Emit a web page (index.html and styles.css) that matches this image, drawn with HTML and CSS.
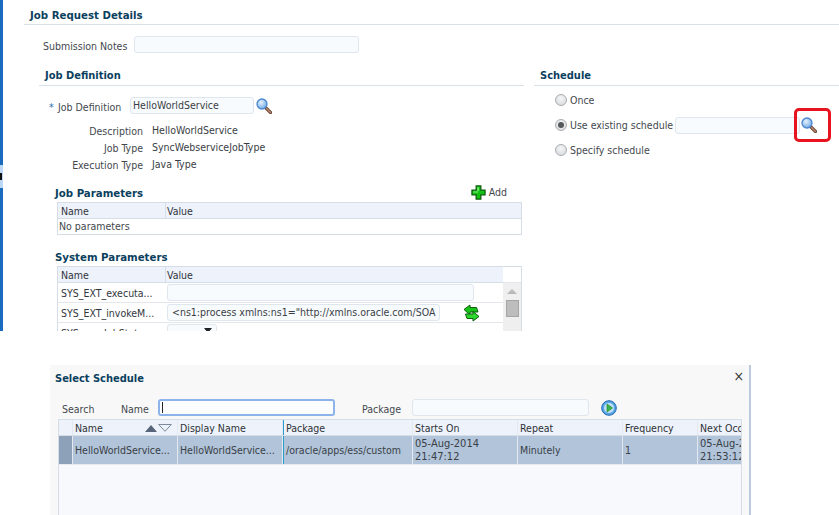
FILE: index.html
```html
<!DOCTYPE html>
<html lang="en">
<head>
<meta charset="utf-8">
<title>Job Request Details</title>
<link rel="stylesheet" href="styles.css">
</head>
<body>
<svg class="defs" width="0" height="0" aria-hidden="true">
  <defs>
    <radialGradient id="lens" cx="40%" cy="35%" r="70%"><stop offset="0" stop-color="#e6f2fc"/><stop offset="1" stop-color="#6aa5e6"/></radialGradient>
    <symbol id="search" viewBox="0 0 16 16">
      <path d="M10 10L14.5 14.5" stroke="#6b4a3a" stroke-width="3.2" stroke-linecap="round"/>
      <path d="M10.500 10.500L14.300 14.300" stroke="#c08a70" stroke-width="1.300" stroke-linecap="round"/>
      <circle cx="6" cy="6" r="5" fill="url(#lens)" stroke="#4a86cf" stroke-width="1.300"/>
    </symbol>
  </defs>
</svg>
<div class="top">
  <div class="bar"><div class="bar-upper"></div><div class="bar-handle"><span class="bar-arrow"></span></div><div class="bar-lower"></div></div>
  <main class="main">
    <h1 class="title">Job Request Details</h1>
    <div class="notes"><label class="notes-label">Submission Notes</label><span class="input notes-input"></span></div>
    <div class="cols">
      <section class="col-left">
        <h2 class="sub">Job Definition</h2>
        <div class="jobdef"><span class="star">*</span><label class="jobdef-label">Job Definition</label><span class="input jobdef-input">HelloWorldService</span><svg class="icon16"><use href="#search"/></svg></div>
        <dl class="facts">
          <dt>Description</dt><dd>HelloWorldService</dd>
          <dt>Job Type</dt><dd>SyncWebserviceJobType</dd>
          <dt>Execution Type</dt><dd>Java Type</dd>
        </dl>
        <div class="tbl-head">
          <h3 class="sub3">Job Parameters</h3>
          <span class="add"><svg class="icon-add" viewBox="0 0 16 16"><path d="M5.500 1h5v4.500H15v5h-4.500V15h-5v-4.500H1v-5h4.500z" fill="#12c312" stroke="#0b5a0b" stroke-width="1.300"/><path d="M6.800 2.500h1.500v4H6.800zM2.500 6.800h5V8h-5z" fill="#8df08d"/></svg>Add</span>
        </div>
        <div class="params">
          <div class="params-row hdr"><span class="c1">Name</span><span class="c2">Value</span></div>
          <div class="empty">No parameters</div>
        </div>
        <h3 class="sub3 sysh">System Parameters</h3>
        <div class="sys">
          <div class="sys-body">
            <div class="params-row hdr"><span class="c1">Name</span><span class="c2">Value</span></div>
            <div class="sys-row"><span class="c1">SYS_EXT_executa...</span><span class="input sys-in1"></span></div>
            <div class="sys-row"><span class="c1">SYS_EXT_invokeM...</span><span class="input sys-in2">&lt;ns1:process xmlns:ns1="http://xmlns.oracle.com/SOA</span><svg class="icon-swap" viewBox="0 0 17 18"><path d="M1 5.500L7 1v2.500h6.500l1.500 4.500H7v3z" fill="#18c418" stroke="#0b5f0b"/><path d="M16 12.500L10 17v-2.500H4L2.500 10H10V7.500z" fill="#2fd62f" stroke="#0b5f0b"/></svg></div>
            <div class="sys-row"><span class="c1">SYS_userJobState</span><span class="input sys-sel"><span class="caret"></span></span></div>
          </div>
          <div class="scroll"><div class="scroll-top"></div><span class="scroll-up"></span><div class="thumb"></div></div>
        </div>
      </section>
      <section class="col-right">
        <h2 class="sub">Schedule</h2>
        <div class="radio-row r1"><span class="radio"></span>Once</div>
        <div class="radio-row r2"><span class="radio on"></span>Use existing schedule<span class="input sched-input"></span><svg class="icon16 sched-icon"><use href="#search"/></svg><span class="red"></span></div>
        <div class="radio-row r3"><span class="radio"></span>Specify schedule</div>
      </section>
    </div>
  </main>
</div>
<section class="dialog">
  <div class="dlg-head"><h2 class="sub">Select Schedule</h2><span class="close">×</span></div>
  <div class="search">
    <span class="s-search">Search</span><label class="s-name">Name</label>
    <span class="input focus"><span class="cursor"></span></span>
    <label class="s-pack">Package</label><span class="input s-packin"></span>
    <svg class="icon-go" viewBox="0 0 16 16"><circle cx="8" cy="8" r="7.300" fill="#5aa7e6" stroke="#1f65ad"/><circle cx="8" cy="8" r="5" fill="#bfe0f7"/><path d="M6 4v8l5.500-4z" fill="#39b54a" stroke="#1a7f2a" stroke-width=".6"/></svg>
  </div>
  <div class="grid">
    <div class="g-row g-hdr">
      <span class="g0"></span>
      <span class="gc sorted">Name<span class="sort"><span class="tri-up"></span><svg class="tri-down" viewBox="0 0 14 8"><path d="M.7.500h12.600L7 7.300z" fill="none" stroke="#7c8a99"/></svg></span></span>
      <span class="gc">Display Name</span><span class="gc mark">Package</span><span class="gc">Starts On</span><span class="gc">Repeat</span><span class="gc">Frequency</span><span class="gc">Next Occurrence</span>
    </div>
    <div class="g-row g-sel">
      <span class="g0"></span>
      <span class="gc">HelloWorldService...</span><span class="gc">HelloWorldService...</span><span class="gc mark">/oracle/apps/ess/custom</span><span class="gc date"><span>05-Aug-2014<br>21:47:12</span></span><span class="gc">Minutely</span><span class="gc">1</span><span class="gc date"><span>05-Aug-2014<br>21:53:12</span></span>
    </div>
  </div>
</section>
</body>
</html>
```
FILE: styles.css
```css
* { box-sizing: border-box; }
html, body { margin: 0; padding: 0; background: #fff; }
body {
  width: 839px; height: 515px; overflow: hidden;
  font-family: "DejaVu Sans Condensed", "DejaVu Sans", sans-serif;
  font-stretch: condensed; font-size: 10.5px; line-height: 14px; color: #44484e;
}
.defs { position: absolute; }
h1, h2, h3, dl, dd { margin: 0; }

.top { height: 331px; overflow: hidden; display: flex; }
.bar { width: 3px; flex: none; display: flex; flex-direction: column; }
.bar-upper { height: 165px; background: #1a6bbd; }
.bar-lower { flex: 1; background: #1a6bbd; }
.bar-handle { height: 23px; background: #bcd8f4; display: flex; align-items: center; }
.bar-arrow { width: 2px; height: 7px; background: #111; }

.main { flex: 1; min-width: 0; }
.title, .sub, .sub3 { font-weight: 700; color: #0b3f5e; font-size: 11px; line-height: 14px; }
.title, .sub3 { font-size: 11.35px; }
.title { height: 25px; padding: 8px 0 0 6px; margin-left: 21px; border-bottom: 1px solid #d9e0e8; }
.notes { display: flex; align-items: center; height: 17px; margin: 11px 0 0 40px; }
.notes-label { width: 91px; padding-top: 2px; }
.input { display: block; flex: none; border: 1px solid #dfe6ee; border-radius: 3px; background: #f8fbfe; height: 17px; white-space: nowrap; overflow: hidden; color: #3a3e44; line-height: 15px; padding-left: 2px; }
.notes-input { width: 225px; }

.cols { display: flex; margin-top: 15px; }
.col-left { width: 485px; margin-left: 36px; flex: none; }
.col-right { flex: 1; margin-left: 10px; }
.sub { height: 18px; padding: 1px 0 0 6px; border-bottom: 1px solid #d9e0e8; }

.jobdef { display: flex; align-items: center; height: 17px; margin-top: 11px; }
.star { width: 9px; margin-left: 10px; color: #2a6fb0; padding-top: 2px; }
.jobdef-label { width: 72px; padding-top: 2px; }
.jobdef-input { width: 124px; }
.icon16 { width: 16px; height: 16px; flex: none; margin-left: 2px; }

.facts { display: grid; grid-template-columns: 104px 1fr; column-gap: 9px; row-gap: 3px; margin-top: 10px; }
.facts dt { text-align: right; }
.facts dd { margin-top: -1px; color: #3a3e44; }

.tbl-head { display: flex; justify-content: space-between; align-items: center; height: 16px; margin: 12px 17px 0 16px; }
.add { display: flex; align-items: center; gap: 3px; }
.icon-add { width: 15px; height: 15px; }
.tbl-head .sub3 { padding-top: 1px; }
.sysh { margin: 15px 0 2px 16px; }
.params { margin: 2px 2px 0 18px; border: 1px solid #d5dde7; }
.params-row { display: flex; height: 16px; }
.hdr { background: #eef2fa; border-bottom: 1px solid #d5dde7; color: #30343a; }
.hdr span { padding-top: 1px; }
.c1 { width: 108px; flex: none; padding-left: 3px; }
.hdr .c1 { border-right: 1px solid #d5dde7; }
.c2 { padding-left: 1px; }
.empty { height: 15px; padding-left: 1px; line-height: 14px; }

.sys { display: flex; margin: 0 2px 0 18px; border: 1px solid #d5dde7; border-bottom: 0; }
.sys-body { width: 445px; flex: none; }
.sys-row { display: flex; align-items: center; height: 20px; border-bottom: 1px solid #e3e7ec; }
.sys-row .c1 { width: 109px; color: #33373d; }
.sys-in1 { width: 307px; }
.sys-in2 { width: 273px; padding-left: 4px; }
.sys-sel { width: 50px; position: relative; }
.caret { position: absolute; right: 4px; top: 3px; border: 4px solid transparent; border-top: 5px solid #222; border-bottom: 0; }
.icon-swap { width: 17px; height: 18px; margin-left: 23px; }
.scroll { flex: 1; background: #efefef; display: flex; flex-direction: column; align-items: center; }
.scroll-top { height: 16px; width: 100%; background: #fff; border-bottom: 1px solid #e3e7ec; }
.scroll-up { margin-top: 6px; border: 5px solid transparent; border-bottom: 5px solid #b9b9b9; border-top: 0; }
.thumb { width: 13px; height: 17px; margin-top: 6px; background: #bdbdbd; border: 1px solid #a5a5a5; }

.radio-row { display: flex; align-items: center; height: 16px; margin-left: 21px; }
.r1 { margin-top: 6px; }
.r2 { margin-top: 9px; position: relative; }
.r3 { margin-top: 9px; }
.radio { width: 12px; height: 12px; border-radius: 50%; margin-right: 3px; border: 1px solid #a9adb2; background: radial-gradient(circle at 50% 35%, #f6f6f6, #d4d6d9); flex: none; position: relative; }
.radio.on::after { content: ""; position: absolute; left: 2px; top: 2px; width: 6px; height: 6px; border-radius: 50%; background: #55585c; }
.sched-input { width: 125px; margin-left: 2px; }
.sched-icon { margin-left: 1px; }
.red { position: absolute; left: 239px; top: -9px; width: 37px; height: 34px; border: 3px solid #e7131f; border-radius: 5px; }

.dialog { width: 701px; height: 150px; margin: 34px 0 0 50px; background: #f8f8f8; border-right: 2px solid #bccadb; padding: 0 8px 0 5px; }
.dlg-head { display: flex; justify-content: space-between; padding-top: 7px; height: 34px; }
.dlg-head .sub { border: 0; padding: 0; }
.close { font-size: 14px; color: #333; line-height: 8px; margin-right: -3px; }
.search { display: flex; align-items: center; height: 17px; }
.s-search { margin-left: 7px; width: 59px; padding-top: 2px; }
.s-name { width: 37px; padding-top: 2px; }
.focus { width: 177px; border-color: #8db4ea; border-width: 2px; background: #fbfdff; border-radius: 3px; padding: 1px 0 0 2px; }
.cursor { display: block; width: 1px; height: 11px; background: #222; }
.s-pack { margin-left: 27px; width: 50px; padding-top: 2px; }
.s-packin { width: 177px; }
.icon-go { width: 16px; height: 16px; margin-left: 12px; }
.grid { margin: 3px 0 0 3px; width: 684px; height: 96px; background: #f8f9fd; border-left: 1px solid #d5dde7; border-top: 1px solid #d5dde7; border-right: 1px solid #d5dde7; overflow: hidden; }
.g-row { display: grid; grid-template-columns: 14px 105px 105px 130px 105px 105px 75px 43px; }
.g-hdr { height: 16px; background: #eef2fa; border-bottom: 1px solid #d5dde7; color: #2e3238; }
.g-sel { height: 29px; background: #b1c4da; border-bottom: 1px solid #e6ebf2; color: #3a3f46; line-height: 13px; }
.g0 { display: block; height: 100%; border-right: 1px solid #e4e9f1; }
.g-sel .g0 { background: #8da1b8; }
.gc { display: flex; align-items: center; height: 100%; padding-left: 2px; border-right: 1px solid #e4e9f1; white-space: nowrap; overflow: hidden; }
.g-hdr .gc { padding-top: 1px; }
.date { font-size: 11px; }
.g-row .gc:last-child { border-right: 0; }
.mark { box-shadow: inset 1px 0 0 #2b9bc9; padding-left: 3px; }
.sorted { justify-content: space-between; }
.sort { display: flex; align-items: center; gap: 1px; margin-right: 5px; }
.tri-up { border: 6px solid transparent; border-bottom: 7px solid #566578; border-top: 0; }
.tri-down { width: 14px; height: 8px; }
```
